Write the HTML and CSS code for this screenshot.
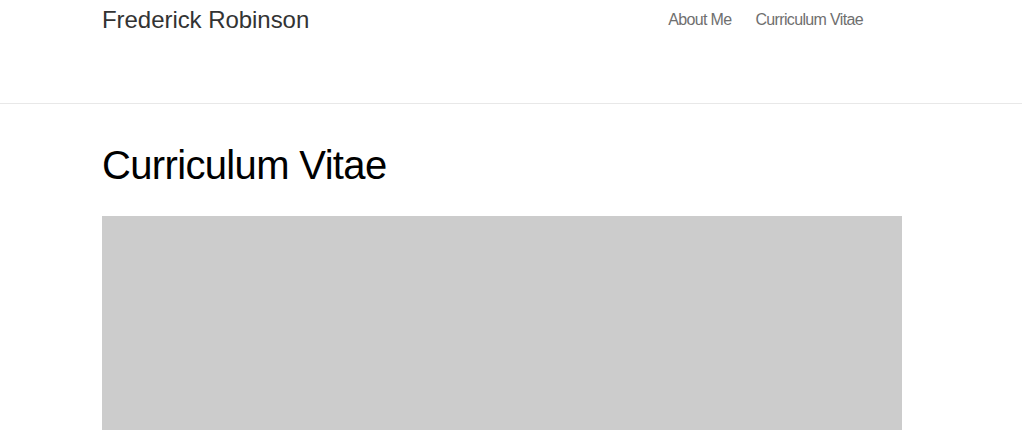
FILE: index.html
```html
<!DOCTYPE html>
<html lang="en">
<head>
<meta charset="utf-8">
<title>Curriculum Vitae</title>
<link rel="stylesheet" href="styles.css">
</head>
<body>
<header class="site-header">
  <div class="wrap header-inner">
    <a class="site-title" href="#">Frederick Robinson</a>
    <nav class="site-nav">
      <a class="nav-link" href="#">About Me</a>
      <a class="nav-link" href="#">Curriculum Vitae</a>
    </nav>
  </div>
</header>
<main class="wrap content">
  <h1 class="page-title">Curriculum Vitae</h1>
  <div class="cv-frame"></div>
</main>
</body>
</html>
```
FILE: styles.css
```css
html, body {
  margin: 0;
  padding: 0;
  background: #fff;
  font-family: "Liberation Sans", Arial, Helvetica, sans-serif;
  overflow: hidden;
}

.wrap {
  width: 818px;
  margin: 0 auto;
}

.site-header {
  height: 103px;
  border-bottom: 1px solid #e8e8e8;
}

.header-inner {
  display: flex;
  justify-content: space-between;
  align-items: flex-start;
}

.site-title {
  font-size: 24px;
  line-height: 40px;
  color: #333;
  text-decoration: none;
  letter-spacing: -0.05px;
}

.site-nav {
  display: flex;
  gap: 24px;
  padding-right: 57px;
}

.nav-link {
  font-size: 16px;
  line-height: 39px;
  color: #6f6f6f;
  text-decoration: none;
  letter-spacing: -0.65px;
}

.content {
  padding-top: 39px;
}

.page-title {
  margin: 0 0 29px;
  font-size: 40px;
  line-height: 44px;
  font-weight: normal;
  color: #000;
  letter-spacing: -0.65px;
}

.cv-frame {
  width: 800px;
  height: 600px;
  background: #ccc;
}
```
